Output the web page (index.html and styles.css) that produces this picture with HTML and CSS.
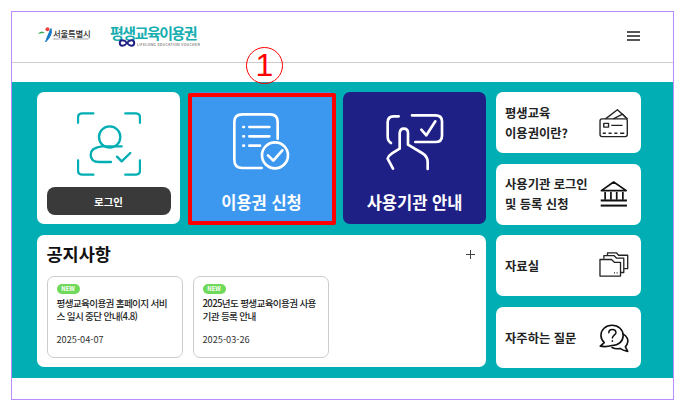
FILE: index.html
```html
<!DOCTYPE html>
<html lang="ko">
<head>
    <meta charset="UTF-8">
    <meta name="viewport" content="width=device-width, initial-scale=1.0">
    <title>평생교육이용권</title>
    <link rel="stylesheet" href="styles.css">
</head>
<body>
    <div class="frame">
        <header class="top">
            <div class="seoul">
                <svg class="seoul-mark" viewBox="0 0 15 15" aria-hidden="true">
                    <circle cx="9.5" cy="2.2" r="2" fill="#e8443a"/>
                    <path d="M0 7 Q3 2.5 7 6 Q3 6 0 7Z" fill="#3aa655"/>
                    <path d="M13 1.5 Q15 8 7.5 15 Q10 8 13 1.5Z" fill="#1478c8" stroke="#1478c8" stroke-width="1"/>
                </svg>
                <div class="seoul-text">
                    <span class="seoul-name">서울특별시</span>
                    <span class="seoul-sub">SEOUL METROPOLITAN GOVERNMENT</span>
                </div>
            </div>
            <div class="brand">
                <span class="brand-name">평생교육이용권</span>
                <div class="brand-sub">
                    <svg class="brand-loop" viewBox="0 0 20 10" aria-hidden="true">
                        <path d="M10 5 C7 1 2 1 2 5 C2 9 7 9 10 5 C13 1 18 1 18 5 C18 9 13 9 10 5Z" fill="none" stroke="#1f2086" stroke-width="2.2"/>
                    </svg>
                    <span>LIFELONG EDUCATION VOUCHER</span>
                </div>
            </div>
            <div class="burger"><i></i><i></i><i></i></div>
        </header>

        <main class="band">
            <div class="left">
                <div class="cards">
                    <div class="card card-login">
                        <svg class="big-icon" viewBox="138 80 192 192" fill="none" stroke="#00aeb3" stroke-width="7" stroke-linecap="round" stroke-linejoin="round" aria-hidden="true">
                            <path d="M141 112V97Q141 84 154 84H187"/>
                            <path d="M283 84H314Q327 84 327 97V112"/>
                            <path d="M141 225V255Q141 268 154 268H187"/>
                            <path d="M283 268H314Q327 268 327 255V225"/>
                            <circle cx="236" cy="155" r="32"/>
                            <path d="M272 183H212Q179 187 179 208Q179 230 205 230H240"/>
                            <path d="M258 214L272 228L298 203"/>
                        </svg>
                        <button class="login-btn">로그인</button>
                    </div>
                    <div class="card card-blue">
                        <svg class="big-icon" viewBox="600 75 192 192" fill="none" stroke="#fff" stroke-width="8" stroke-linecap="round" stroke-linejoin="round" aria-hidden="true">
                            <path d="M743 155V105Q743 82 720 82H637Q613 82 613 105V218Q613 243 637 243H695"/>
                            <path d="M658 120H718M658 148H718M658 176H690"/>
                            <path d="M640 120H642M640 148H642M640 176H642"/>
                            <circle cx="735" cy="205" r="39"/>
                            <path d="M714 205L730 221L757 190"/>
                        </svg>
                        <span class="card-label">이용권 신청</span>
                        <span class="marker"></span>
                    </div>
                    <div class="card card-navy">
                        <svg class="big-icon" viewBox="128 72 192 192" fill="none" stroke="#fff" stroke-width="8" stroke-linecap="round" stroke-linejoin="round" aria-hidden="true">
                            <path d="M175 85H160Q142 85 142 103V145Q142 160 152 165"/>
                            <path d="M215 82H285Q305 82 305 100V143Q305 162 285 162H225"/>
                            <path d="M243 125L258 142L285 100"/>
                            <path d="M158 242L142 212Q145 202 155 196L178 182V135Q180 122 190 122Q203 122 203 135V170L245 195Q262 205 262 222V243"/>
                        </svg>
                        <span class="card-label">사용기관 안내</span>
                    </div>
                </div>
                <section class="notice">
                    <div class="notice-head">
                        <h2>공지사항</h2>
                        <svg class="plus" viewBox="0 0 9 9" aria-hidden="true"><path d="M4.5 0V9M0 4.5H9" stroke="#444" stroke-width="1"/></svg>
                    </div>
                    <div class="notice-list">
                        <article class="note">
                            <span class="badge">NEW</span>
                            <p>평생교육이용권 홈페이지 서비스 일시 중단 안내(4.8)</p>
                            <time>2025-04-07</time>
                        </article>
                        <article class="note">
                            <span class="badge">NEW</span>
                            <p>2025년도 평생교육이용권 사용기관 등록 안내</p>
                            <time>2025-03-26</time>
                        </article>
                    </div>
                </section>
            </div>
            <div class="side">
                <a class="tile">
                    <span>평생교육<br>이용권이란?</span>
                    <svg class="tile-icon" viewBox="776 68 88 88" fill="none" stroke="#222" stroke-width="4" stroke-linejoin="round" aria-hidden="true">
                        <rect x="779" y="100" width="80" height="52" rx="6"/>
                        <path d="M795 100L830 73L860 100"/>
                        <path d="M818 100L845 86L855 97"/>
                        <rect x="790" y="113" width="14" height="11"/>
                        <path d="M812 119H845M787 142H796M804 142H813M821 142H830M838 142H850"/>
                    </svg>
                </a>
                <a class="tile">
                    <span>사용기관 로그인<br>및 등록 신청</span>
                    <svg class="tile-icon" viewBox="780 284 88 88" fill="none" stroke="#111" stroke-width="5" aria-hidden="true">
                        <path d="M787 318L823 293L860 318Z" stroke-linejoin="round"/>
                        <path d="M798 322V345M815 322V345M832 322V345M850 322V345"/>
                        <path d="M785 347H862" stroke-width="6"/>
                        <path d="M785 362H862" stroke-width="6"/>
                    </svg>
                </a>
                <a class="tile">
                    <span>자료실</span>
                    <svg class="tile-icon" viewBox="772 64 92 92" fill="none" stroke="#222" stroke-width="4" stroke-linejoin="round" aria-hidden="true">
                        <path d="M775 141V90H810L820 99H838V141Z"/>
                        <path d="M787 88V78H818L826 86H848V130H839"/>
                        <path d="M798 76V70H826L832 77H860V118H849"/>
                        <path d="M818 131H821M826 131H829"/>
                    </svg>
                </a>
                <a class="tile">
                    <span>자주하는 질문</span>
                    <svg class="tile-icon" viewBox="772 274 92 92" fill="none" stroke="#111" stroke-width="5" stroke-linecap="round" stroke-linejoin="round" aria-hidden="true">
                        <path d="M812 281C792 281 778 295 778 312C778 321 782 328 788 334L776 345C790 348 802 346 812 343C832 343 846 330 846 312C846 295 832 281 812 281Z"/>
                        <path d="M846 308C856 314 862 323 860 333C859 339 856 344 853 347L860 361C850 359 842 356 836 352C828 354 820 353 812 349"/>
                        <path d="M802 304C802 297 808 294 813 294C819 294 824 298 824 304C824 311 813 312 813 320" stroke-width="4.5"/>
                        <path d="M813 329V330"/>
                    </svg>
                </a>
            </div>
        </main>

        <div class="step">1</div>
    </div>
</body>
</html>
```

FILE: styles.css
```css
* { box-sizing: border-box; }
html, body { margin: 0; padding: 0; background: #fff; }
body { font-family: "Noto Sans CJK KR", "Noto Sans", sans-serif; color: #222; }

.frame { position: relative; width: 663px; height: 389px; margin: 11px 0 0 11px; border: 1px solid #b98cff; }

.top { display: flex; align-items: center; height: 51px; padding: 0 33px 0 26px; border-bottom: 1px solid #ccc; }
.seoul { display: flex; align-items: center; width: 72px; margin-top: -5px; }
.seoul-mark { width: 15px; height: 15px; flex: none; }
.seoul-text { display: flex; flex-direction: column; }
.seoul-name { font-size: 8.4px; line-height: 10px; font-weight: 500; letter-spacing: -0.2px; white-space: nowrap; color: #333; }
.seoul-sub { font-size: 2px; line-height: 3px; white-space: nowrap; color: #777; }
.brand { display: flex; flex-direction: column; width: 94px; margin-top: -2px; }
.brand-name { font-size: 15px; line-height: 17px; font-weight: 700; letter-spacing: -1.5px; color: #16aeb0; white-space: nowrap; }
.brand-sub { display: flex; align-items: center; gap: 1px; height: 8px; padding-left: 8px; font-size: 3.6px; letter-spacing: 0.3px; color: #444; white-space: nowrap; }
.brand-loop { width: 18px; height: 10px; flex: none; margin-top: -3px; }
.burger { display: flex; flex-direction: column; gap: 2.7px; margin: -2px 0 0 auto; width: 13px; }
.burger i { display: block; height: 1.5px; background: #555; }

.band { display: flex; gap: 10px; height: 296px; margin-top: 19px; padding: 10px 0 0 25px; background: #00aeb3; }
.left { display: flex; flex-direction: column; gap: 11px; width: 449px; }
.cards { display: grid; grid-template-columns: 143px 148px 143px; gap: 7.5px; height: 132px; }

.card { position: relative; display: flex; flex-direction: column; align-items: center; border-radius: 7px; padding-top: 20px; }
.card-login { background: #fff; }
.card-blue { background: #3c97ef; }
.card-navy { background: #1f2086; }
.big-icon { width: 64px; height: 64px; flex: none; }
.card-label { margin-top: 15px; font-size: 16.5px; line-height: 22px; font-weight: 700; color: #fff; white-space: nowrap; }
.login-btn { width: 124px; height: 28px; margin-top: 11px; border: none; border-radius: 8px; background: #3a3a3a; color: #fff; font-family: inherit; font-size: 10.5px; font-weight: 700; }

/* 빨간 표시 */
.marker { position: absolute; top: 1px; left: 0; right: 0; bottom: -1px; border: 4px solid #f00; border-radius: 2px; }
.step { position: absolute; left: 234px; top: 35px; width: 37px; height: 37px; border: 1.5px solid #f00; border-radius: 50%; color: #f00; font-family: "Liberation Sans", sans-serif; font-size: 32px; line-height: 34px; text-align: center; }

.notice { height: 132px; padding: 7px 10px 0 9.5px; background: #fff; border-radius: 7px; }
.notice-head { display: flex; align-items: center; justify-content: space-between; height: 24px; padding-right: 1px; }
.notice-head h2 { margin: 0; font-size: 17.5px; line-height: 24px; font-weight: 700; color: #111; }
.plus { width: 9px; height: 9px; }
.notice-list { display: flex; gap: 10px; margin-top: 10px; }
.note { display: flex; flex-direction: column; align-items: flex-start; width: 136px; height: 82px; padding: 7px 8px 0 9px; border: 1px solid #ccc; border-radius: 7px; }
.badge { width: 23px; height: 10px; border-radius: 5px; background: #6fd95a; color: #fff; font-size: 6px; line-height: 10px; font-weight: 700; text-align: center; }
.note p { margin: 3px 0 0; height: 27px; font-size: 9.6px; line-height: 13.4px; font-weight: 500; letter-spacing: -0.65px; color: #222; word-break: break-all; }
.note time { margin-top: 9px; font-size: 9.2px; line-height: 13px; color: #333; }

.side { display: flex; flex-direction: column; gap: 10.7px; width: 145px; }
.tile { display: flex; align-items: center; justify-content: space-between; height: 61px; padding: 0 12px 0 9px; background: #fff; border-radius: 7px; font-size: 12.3px; line-height: 20px; font-weight: 700; color: #222; white-space: nowrap; }
.tile-icon { width: 30px; height: 30px; flex: none; }
```
